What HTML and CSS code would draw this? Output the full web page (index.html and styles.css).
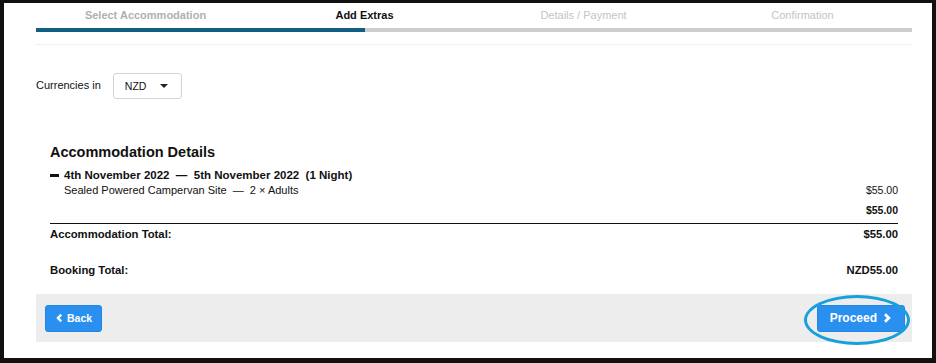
FILE: index.html
```html
<!DOCTYPE html>
<html>
<head>
<meta charset="utf-8">
<link rel="stylesheet" href="styles.css">
</head>
<body>
<div class="frame">
  <div class="page">
    <div class="steps">
      <div class="step done">Select Accommodation</div>
      <div class="step active">Add Extras</div>
      <div class="step todo">Details / Payment</div>
      <div class="step todo">Confirmation</div>
    </div>
    <div class="bar"><div class="bar-fill"></div></div>
    <div class="divider"></div>

    <div class="currency">
      <span class="currency-label">Currencies in</span>
      <div class="select"><span>NZD</span><span class="caret"></span></div>
    </div>

    <div class="details">
      <h2 class="title">Accommodation Details</h2>
      <div class="dates"><span class="minus"></span>4th November 2022 &nbsp;—&nbsp; 5th November 2022 &nbsp;(1 Night)</div>
      <div class="row item"><span class="item-name">Sealed Powered Campervan Site &nbsp;—&nbsp; 2 × Adults</span><span>$55.00</span></div>
      <div class="row subtotal"><span></span><span>$55.00</span></div>
      <div class="row total"><span>Accommodation Total:</span><span>$55.00</span></div>
      <div class="row grand"><span>Booking Total:</span><span>NZD55.00</span></div>
    </div>

    <div class="footer">
      <button class="btn"><svg class="chev" viewBox="0 0 8 10" width="7" height="10"><path d="M6 1.2 L2.2 5 L6 8.8" fill="none" stroke="#fff" stroke-width="2.6" stroke-linejoin="miter"/></svg>Back</button>
      <div class="proceed-wrap">
        <button class="btn btn-lg">Proceed<svg class="chev chev-r" viewBox="0 0 8 10" width="8" height="10"><path d="M2 1.2 L5.8 5 L2 8.8" fill="none" stroke="#fff" stroke-width="2.8" stroke-linejoin="miter"/></svg></button>
        <span class="ring"></span>
      </div>
    </div>
  </div>
</div>
</body>
</html>
```

FILE: styles.css
```css
* { box-sizing: border-box; }
html, body { margin: 0; padding: 0; }
body {
  font-family: "Liberation Sans", Arial, sans-serif;
  color: #111;
  background: #000;
}
.frame {
  width: 936px;
  height: 363px;
  border-style: solid;
  border-color: #111;
  border-width: 3px 4px 5px 4px;
  background: #fff;
  overflow: hidden;
}
.page {
  padding: 0 20px 0 32px;
}
.steps {
  display: grid;
  grid-template-columns: repeat(4, 1fr);
  padding-top: 5px;
  font-size: 11px;
  line-height: 14px;
  text-align: center;
}
.step.done { color: #b0b0b0; font-weight: bold; }
.step.active { color: #111; font-weight: bold; }
.step.todo { color: #c4c4c4; }
.bar {
  margin-top: 6px;
  height: 4px;
  background: #cdcdcd;
}
.bar-fill {
  width: 329px;
  height: 100%;
  background: #125f86;
}
.divider {
  margin-top: 12px;
  border-top: 1px dotted #e6e6e6;
}
.currency {
  display: flex;
  align-items: center;
  gap: 12px;
  margin-top: 28px;
  font-size: 11px;
}
.currency-label { margin-top: -2px; }
.select {
  width: 69px;
  height: 26px;
  border: 1px solid #d4d4d4;
  border-radius: 3px;
  display: flex;
  align-items: center;
  justify-content: space-between;
  padding: 0 13px 0 11px;
  font-size: 10.5px;
}
.caret {
  width: 0; height: 0;
  border-left: 4px solid transparent;
  border-right: 4px solid transparent;
  border-top: 4px solid #222;
}
.details {
  padding: 0 14px;
  margin-top: 44px;
}
.title {
  margin: 0;
  font-size: 14.5px;
  line-height: 18px;
  font-weight: bold;
}
.dates {
  margin-top: 7px;
  font-size: 11.5px;
  line-height: 14px;
  font-weight: bold;
  display: flex;
  align-items: center;
  white-space: pre;
}
.minus {
  display: inline-block;
  width: 9px;
  height: 3px;
  background: #111;
  margin-right: 5px;
}
.row {
  display: flex;
  justify-content: space-between;
}
.item {
  margin-top: 2px;
  font-size: 10.5px;
  line-height: 13px;
}
.item-name { padding-left: 14px; font-size: 11px; }
.subtotal {
  margin-top: 7px;
  font-size: 10.5px;
  line-height: 13px;
  font-weight: bold;
  padding-bottom: 6px;
  border-bottom: 1px solid #111;
}
.total {
  margin-top: 3px;
  font-size: 11.3px;
  line-height: 14px;
  font-weight: bold;
}
.grand {
  margin-top: 22px;
  font-size: 11.3px;
  line-height: 14px;
  font-weight: bold;
}
.footer {
  margin-top: 17px;
  height: 48px;
  background: #ededed;
  display: flex;
  align-items: center;
  justify-content: space-between;
  padding: 0 7px 0 9px;
}
.btn {
  font-family: inherit;
  background: #2a90ef;
  color: #fff;
  border: 1px solid #2585e0;
  border-radius: 3px;
  height: 27px;
  padding: 0 9px 0 10px;
  font-size: 10.5px;
  font-weight: bold;
  display: flex;
  align-items: center;
  gap: 4px;
}
.btn-lg {
  font-size: 12px;
  height: 27px;
  padding: 0 13px 0 12px;
  gap: 6px;
}
.proceed-wrap {
  position: relative;
}
.ring {
  position: absolute;
  left: -13px;
  top: -10px;
  width: 106px;
  height: 50px;
  border: 3px solid #17a0db;
  border-radius: 50%;
}
```
